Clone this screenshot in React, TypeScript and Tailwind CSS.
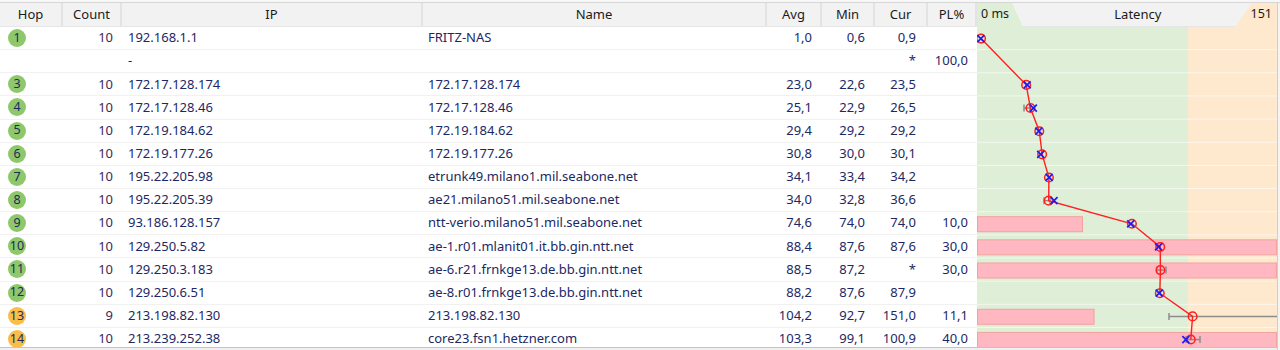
import React from 'react';

type Hop = {
  hop: string;
  tone: 'green' | 'orange' | 'none';
  count: string;
  ip: string;
  name: string;
  avg: string;
  min: string;
  cur: string;
  pl: string;
};

const hops: Hop[] = [
  { hop: '1', tone: 'green', count: '10', ip: '192.168.1.1', name: 'FRITZ-NAS', avg: '1,0', min: '0,6', cur: '0,9', pl: '' },
  { hop: '', tone: 'none', count: '', ip: '-', name: '', avg: '', min: '', cur: '*', pl: '100,0' },
  { hop: '3', tone: 'green', count: '10', ip: '172.17.128.174', name: '172.17.128.174', avg: '23,0', min: '22,6', cur: '23,5', pl: '' },
  { hop: '4', tone: 'green', count: '10', ip: '172.17.128.46', name: '172.17.128.46', avg: '25,1', min: '22,9', cur: '26,5', pl: '' },
  { hop: '5', tone: 'green', count: '10', ip: '172.19.184.62', name: '172.19.184.62', avg: '29,4', min: '29,2', cur: '29,2', pl: '' },
  { hop: '6', tone: 'green', count: '10', ip: '172.19.177.26', name: '172.19.177.26', avg: '30,8', min: '30,0', cur: '30,1', pl: '' },
  { hop: '7', tone: 'green', count: '10', ip: '195.22.205.98', name: 'etrunk49.milano1.mil.seabone.net', avg: '34,1', min: '33,4', cur: '34,2', pl: '' },
  { hop: '8', tone: 'green', count: '10', ip: '195.22.205.39', name: 'ae21.milano51.mil.seabone.net', avg: '34,0', min: '32,8', cur: '36,6', pl: '' },
  { hop: '9', tone: 'green', count: '10', ip: '93.186.128.157', name: 'ntt-verio.milano51.mil.seabone.net', avg: '74,6', min: '74,0', cur: '74,0', pl: '10,0' },
  { hop: '10', tone: 'green', count: '10', ip: '129.250.5.82', name: 'ae-1.r01.mlanit01.it.bb.gin.ntt.net', avg: '88,4', min: '87,6', cur: '87,6', pl: '30,0' },
  { hop: '11', tone: 'green', count: '10', ip: '129.250.3.183', name: 'ae-6.r21.frnkge13.de.bb.gin.ntt.net', avg: '88,5', min: '87,2', cur: '*', pl: '30,0' },
  { hop: '12', tone: 'green', count: '10', ip: '129.250.6.51', name: 'ae-8.r01.frnkge13.de.bb.gin.ntt.net', avg: '88,2', min: '87,6', cur: '87,9', pl: '' },
  { hop: '13', tone: 'orange', count: '9', ip: '213.198.82.130', name: '213.198.82.130', avg: '104,2', min: '92,7', cur: '151,0', pl: '11,1' },
  { hop: '14', tone: 'orange', count: '10', ip: '213.239.252.38', name: 'core23.fsn1.hetzner.com', avg: '103,3', min: '99,1', cur: '100,9', pl: '40,0' },
];

// min..max spread drawn in grey, in chart pixels
const spreads: Record<number, [number, number]> = {
  3: [47, 53],
  7: [67, 73],
  10: [180, 189],
  12: [192, 300],
  13: [209, 223],
};

const ROW = 23.15;
const num = (s: string) => parseFloat(s.replace(',', '.'));
const px = (v: number) => 2 + 2.05 * v;

const cols = 'grid grid-cols-[63px_59px_301px_344px_55px_53px_53px_49px]';
const head = 'flex items-center justify-center border-r-2 border-[#e3e3e3] text-[13px] text-[#1b1b1b]';

function HopBadge({ hop, tone }: { hop: string; tone: Hop['tone'] }) {
  if (tone === 'none') return null;
  return (
    <div
      className={
        'ml-[8px] flex h-[18px] w-[18px] items-center justify-center rounded-full text-[12.5px] leading-none text-[#1d2a5c] ' +
        (tone === 'green' ? 'bg-[#8fc86b]' : 'bg-[#fbbd4a]')
      }
    >
      {hop}
    </div>
  );
}

function LatencyChart() {
  const h = ROW * hops.length;
  const pts = hops
    .map((r, i) => ({ r, i }))
    .filter(({ r }) => r.avg !== '');
  return (
    <svg width={300} height={h} className="block">
      <rect x={0} y={0} width={211} height={h} fill="#dfeed6" />
      <rect x={211} y={0} width={89} height={h} fill="#fee9ce" />
      {hops.map((_, i) => (
        <line key={i} x1={0} x2={300} y1={ROW * (i + 1) - 0.5} y2={ROW * (i + 1) - 0.5} stroke="#ffffff" strokeOpacity={0.6} />
      ))}
      {hops.map((r, i) => {
        if (!r.pl || num(r.pl) >= 100) return null;
        const w = Math.min(299, num(r.pl) * 10.5);
        return (
          <rect key={i} x={0.5} y={ROW * i + 4.5} width={w} height={15} fill="#ffb7c1" stroke="#f2a39c" />
        );
      })}
      {Object.entries(spreads).map(([k, [a, b]]) => {
        const y = ROW * Number(k) + ROW / 2;
        return (
          <g key={k} stroke="#8c8c8c" strokeWidth={1.5}>
            <line x1={a} x2={b} y1={y} y2={y} />
            <line x1={a} x2={a} y1={y - 3.5} y2={y + 3.5} />
            {b < 300 && <line x1={b} x2={b} y1={y - 3.5} y2={y + 3.5} />}
          </g>
        );
      })}
      <polyline
        points={pts.map(({ r, i }) => `${px(num(r.avg))},${ROW * i + ROW / 2}`).join(' ')}
        fill="none"
        stroke="#ff1f1f"
        strokeWidth={1.4}
      />
      {pts.map(({ r, i }) => {
        const y = ROW * i + ROW / 2;
        const cx = px(num(r.avg));
        const hasCur = r.cur !== '*';
        const xx = hasCur ? px(num(r.cur)) : 0;
        return (
          <g key={i}>
            <circle cx={cx} cy={y} r={4.3} fill="none" stroke="#ff1f1f" strokeWidth={1.5} />
            {hasCur && (
              <g stroke="#1c1cf5" strokeWidth={1.7}>
                <line x1={xx - 3.5} x2={xx + 3.5} y1={y - 3.5} y2={y + 3.5} />
                <line x1={xx - 3.5} x2={xx + 3.5} y1={y + 3.5} y2={y - 3.5} />
              </g>
            )}
          </g>
        );
      })}
    </svg>
  );
}

export default function App() {
  return (
    <div className="relative h-[350px] w-[1280px] overflow-hidden bg-white font-['Noto_Sans',sans-serif]">
      <div className="h-[3px] border-b border-[#d6d6d6] bg-[#f7f7f7]" />
      <div className="flex">
        <div className="w-[977px]">
          <div className={cols + ' h-[24px] border-b border-[#e6e6e6] bg-[#f2f2f2]'}>
            <div className={head}>Hop</div>
            <div className={head}>Count</div>
            <div className={head}>IP</div>
            <div className={head}>Name</div>
            <div className={head}>Avg</div>
            <div className={head}>Min</div>
            <div className={head}>Cur</div>
            <div className={head}>PL%</div>
          </div>
          {hops.map((r, i) => (
            <div key={i} className={cols + ' h-[23.15px] items-center border-b border-[#f1f1f1] text-[13px] text-[#1c2864]'}>
              <div className="flex items-center">
                <HopBadge hop={r.hop} tone={r.tone} />
              </div>
              <div className="pr-[9px] text-right text-[#3d2857]">{r.count}</div>
              <div className="pl-[6px]">{r.ip}</div>
              <div className="pl-[5px]">{r.name}</div>
              <div className="pr-[10px] text-right">{r.avg}</div>
              <div className="pr-[10px] text-right">{r.min}</div>
              <div className="pr-[12px] text-right">{r.cur}</div>
              <div className="pr-[9px] text-right">{r.pl}</div>
            </div>
          ))}
        </div>
        <div className="w-[300px]">
          <div className="relative h-[24px] border-b border-[#e6e6e6] bg-[#f2f2f2]">
            <svg width={300} height={24} className="absolute inset-0">
              <polygon points="0,0 35,0 46,24 0,24" fill="#dfeed6" />
              <polygon points="275,0 300,0 300,24 258,24" fill="#fee9ce" />
            </svg>
            <div className="relative flex h-full items-center justify-between px-[4px] text-[13px] text-[#1b1b1b]">
              <span className="text-[12.5px]">0 ms</span>
              <span className="ml-[16px]">Latency</span>
              <span className="pr-[1px] text-[12.5px]">151</span>
            </div>
          </div>
          <LatencyChart />
        </div>
        <div className="w-[3px] border-l border-[#cfcfcf] bg-[#f4f4f4]" />
      </div>
      <div className="absolute bottom-0 left-0 h-[3px] w-[1277px] border-t border-[#c4c4c4] bg-[#f0f0f0]" />
    </div>
  );
}
